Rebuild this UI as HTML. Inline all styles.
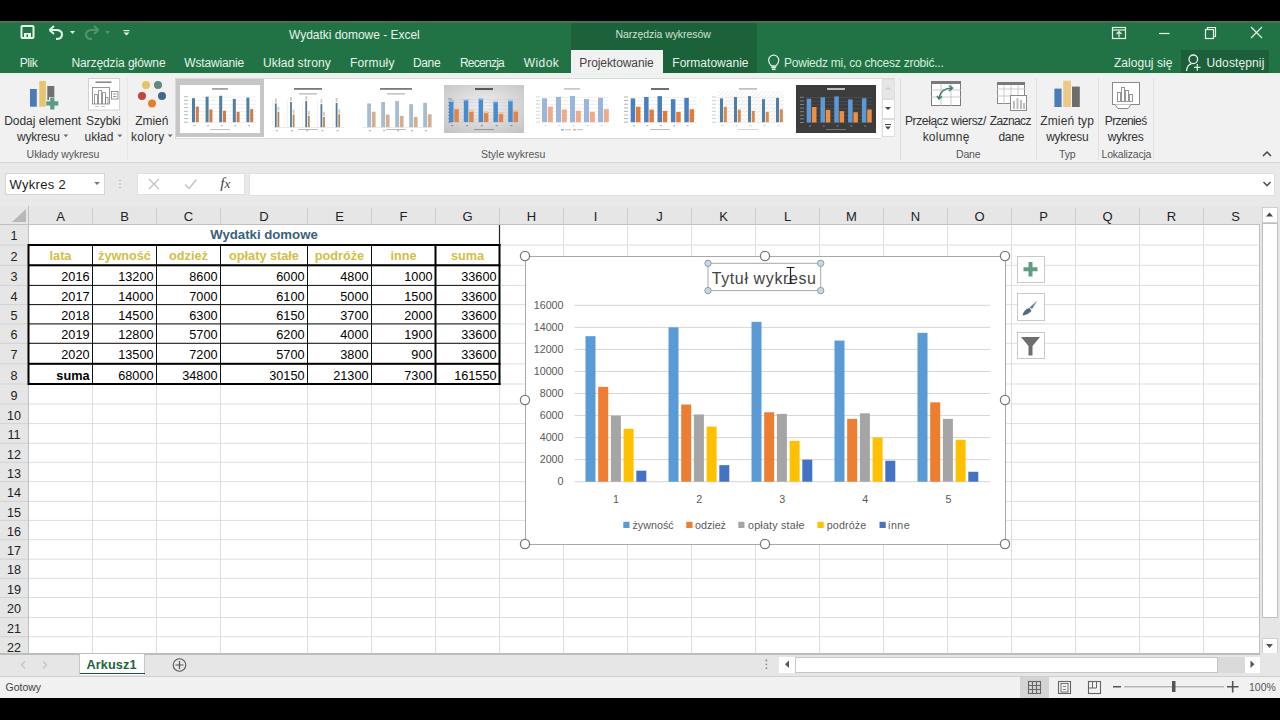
<!DOCTYPE html>
<html><head><meta charset="utf-8"><style>
html,body{margin:0;padding:0;width:1280px;height:720px;overflow:hidden;background:#fff;font-family:"Liberation Sans", sans-serif;}
body>div,body>svg{position:absolute;}
body>div{box-sizing:border-box;}
</style></head><body>
<div style="left:0px;top:0px;width:1280px;height:21px;background:#000"></div>
<div style="left:0px;top:21px;width:1280px;height:52px;background:#217346"></div>
<div style="left:571px;top:21px;width:186px;height:52px;background:#1b6139"></div>
<div style="left:0px;top:21px;width:1280px;height:1.5px;background:#46705a"></div>
<div style="left:571px;top:50px;width:92px;height:23px;background:#f1f1f1"></div>
<div style="left:1181px;top:50px;width:88px;height:23px;background:#1c5f3a"></div>
<svg style="left:0;top:21px" width="140" height="29" viewBox="0 21 140 29">
<g fill="none" stroke="#e6f4ea" stroke-width="2">
<rect x="21.5" y="26" width="12" height="12" rx="1"/>
</g>
<rect x="24" y="33" width="7" height="5" fill="#e6f4ea"/>
<rect x="26.5" y="34.5" width="1.5" height="2.5" fill="#217346"/>
<path d="M51 30 L56 30 Q62 30 62 34.5 Q62 39 56 39" fill="none" stroke="#e6f4ea" stroke-width="2"/>
<path d="M49.5 30 L54 26 M49.5 30 L54 34" fill="none" stroke="#e6f4ea" stroke-width="2"/>
<path d="M70 31 L75 31 L72.5 34 Z" fill="#e6f4ea"/>
<g opacity="0.25">
<path d="M97 30 L92 30 Q86 30 86 34.5 Q86 39 92 39" fill="none" stroke="#e6f4ea" stroke-width="2"/>
<path d="M98.5 30 L94 26 M98.5 30 L94 34" fill="none" stroke="#e6f4ea" stroke-width="2"/>
<path d="M105 31 L110 31 L107.5 34 Z" fill="#e6f4ea"/>
</g>
<rect x="123.5" y="30" width="6" height="1.2" fill="#e6f4ea"/>
<path d="M123.5 32.5 L129.5 32.5 L126.5 35.5 Z" fill="#e6f4ea"/>
</svg>
<div style="left:154.38879464285714px;top:28.5px;width:400px;text-align:center;font-size:12px;color:#e6f4ea;font-weight:normal;white-space:nowrap;line-height:1.15;letter-spacing:-0.022px;">Wydatki domowe - Excel</div>
<div style="left:463.1711259191177px;top:28px;width:400px;text-align:center;font-size:10.5px;color:#cfe3d6;font-weight:normal;white-space:nowrap;line-height:1.15;letter-spacing:-0.058px;">Narzędzia wykresów</div>
<svg style="left:1100px;top:21px" width="180" height="29" viewBox="1100 21 180 29">
<g fill="none" stroke="#e6f4ea" stroke-width="1.2">
<rect x="1112.5" y="27.5" width="13" height="11"/>
<line x1="1112.5" y1="30" x2="1125.5" y2="30"/>
<path d="M1119 37.5 V31.5 M1116.5 34 L1119 31.5 L1121.5 34"/>
<line x1="1159" y1="33.5" x2="1169.5" y2="33.5"/>
<rect x="1205.5" y="29.5" width="8" height="9"/>
<path d="M1207.5 29.5 V27.5 H1215.5 V36.5 H1213.5"/>
<path d="M1251 27 L1262 38 M1262 27 L1251 38"/>
</g></svg>
<div style="left:19.8px;top:57px;font-size:12px;color:#e6f4ea;font-weight:normal;white-space:nowrap;line-height:1.15;letter-spacing:-0.446px;">Plik</div>
<div style="left:71.4px;top:57px;font-size:12px;color:#e6f4ea;font-weight:normal;white-space:nowrap;line-height:1.15;letter-spacing:-0.079px;">Narzędzia główne</div>
<div style="left:184.3px;top:57px;font-size:12px;color:#e6f4ea;font-weight:normal;white-space:nowrap;line-height:1.15;letter-spacing:-0.151px;">Wstawianie</div>
<div style="left:263.1px;top:57px;font-size:12px;color:#e6f4ea;font-weight:normal;white-space:nowrap;line-height:1.15;letter-spacing:0.082px;">Układ strony</div>
<div style="left:349.9px;top:57px;font-size:12px;color:#e6f4ea;font-weight:normal;white-space:nowrap;line-height:1.15;letter-spacing:0.194px;">Formuły</div>
<div style="left:413.0px;top:57px;font-size:12px;color:#e6f4ea;font-weight:normal;white-space:nowrap;line-height:1.15;letter-spacing:-0.363px;">Dane</div>
<div style="left:459.9px;top:57px;font-size:12px;color:#e6f4ea;font-weight:normal;white-space:nowrap;line-height:1.15;letter-spacing:-0.733px;">Recenzja</div>
<div style="left:523.7px;top:57px;font-size:12px;color:#e6f4ea;font-weight:normal;white-space:nowrap;line-height:1.15;letter-spacing:0.440px;">Widok</div>
<div style="left:579.3px;top:57px;font-size:12px;color:#444;font-weight:normal;white-space:nowrap;line-height:1.15;letter-spacing:-0.073px;">Projektowanie</div>
<div style="left:672.3px;top:57px;font-size:12px;color:#e6f4ea;font-weight:normal;white-space:nowrap;line-height:1.15;letter-spacing:0.015px;">Formatowanie</div>
<div style="left:784px;top:57px;font-size:12px;color:#d8eedd;font-weight:normal;white-space:nowrap;line-height:1.15;letter-spacing:-0.231px;">Powiedz mi, co chcesz zrobić...</div>
<svg style="left:764px;top:52px" width="18" height="20" viewBox="764 52 18 20">
<path d="M771.3 65.8 Q768.6 62.8 768.6 60.3 A5.1 5.1 0 0 1 778.8 60.3 Q778.8 62.8 776.1 65.8 Z" fill="none" stroke="#e6f4ea" stroke-width="1.2"/>
<path d="M771.3 67.3 H776.1 M771.9 69.2 H775.5" stroke="#e6f4ea" stroke-width="1.4"/>
</svg>
<div style="left:1114px;top:57px;font-size:12px;color:#e6f4ea;font-weight:normal;white-space:nowrap;line-height:1.15;letter-spacing:0.027px;">Zaloguj się</div>
<div style="left:1206.5px;top:57px;font-size:12px;color:#e6f4ea;font-weight:normal;white-space:nowrap;line-height:1.15;letter-spacing:0.122px;">Udostępnij</div>
<svg style="left:1182px;top:50px" width="22" height="23" viewBox="1182 50 22 23">
<circle cx="1193.3" cy="59.3" r="4.3" fill="none" stroke="#e6f4ea" stroke-width="1.3"/>
<path d="M1186.5 71 Q1187 65 1191.5 63.6" fill="none" stroke="#e6f4ea" stroke-width="1.3"/>
<path d="M1194 67.3 H1200.6 M1197.3 64 V70.8" stroke="#e6f4ea" stroke-width="1.2"/>
</svg>
<div style="left:0px;top:73px;width:1280px;height:89px;background:#f1f1f1"></div>
<div style="left:0px;top:73px;width:1280px;height:4px;background:linear-gradient(#e6f2e9,#eff3f0)"></div>
<div style="left:0px;top:161.6px;width:1280px;height:1px;background:#d4d4d4"></div>
<div style="left:127px;top:78px;width:1px;height:82px;background:#e7e7e7"></div>
<div style="left:900px;top:78px;width:1px;height:82px;background:#dddddd"></div>
<div style="left:1036px;top:78px;width:1px;height:82px;background:#e0e0e0"></div>
<div style="left:1098px;top:78px;width:1px;height:82px;background:#e0e0e0"></div>
<div style="left:1153px;top:78px;width:1px;height:82px;background:#e0e0e0"></div>
<div style="left:-37.02777493990384px;top:148px;width:200px;text-align:center;font-size:10.5px;color:#555;font-weight:normal;white-space:nowrap;line-height:1.15;letter-spacing:-0.056px;">Układy wykresu</div>
<div style="left:413.1804069010417px;top:148px;width:200px;text-align:center;font-size:10.5px;color:#555;font-weight:normal;white-space:nowrap;line-height:1.15;letter-spacing:-0.039px;">Style wykresu</div>
<div style="left:868.21626953125px;top:148px;width:200px;text-align:center;font-size:10.5px;color:#555;font-weight:normal;white-space:nowrap;line-height:1.15;letter-spacing:-0.167px;">Dane</div>
<div style="left:967.268828125px;top:148px;width:200px;text-align:center;font-size:10.5px;color:#555;font-weight:normal;white-space:nowrap;line-height:1.15;letter-spacing:-0.062px;">Typ</div>
<div style="left:1026.397603515625px;top:148px;width:200px;text-align:center;font-size:10.5px;color:#555;font-weight:normal;white-space:nowrap;line-height:1.15;letter-spacing:-0.205px;">Lokalizacja</div>
<div style="left:-57.31588541666666px;top:115px;width:200px;text-align:center;font-size:12px;color:#333;font-weight:normal;white-space:nowrap;line-height:1.15;letter-spacing:-0.032px;">Dodaj element</div>
<div style="left:17px;top:130.5px;font-size:12px;color:#333;font-weight:normal;white-space:nowrap;line-height:1.15;letter-spacing:-0.185px;">wykresu</div>
<div style="left:3.3255312500000116px;top:115px;width:200px;text-align:center;font-size:12px;color:#333;font-weight:normal;white-space:nowrap;line-height:1.15;letter-spacing:-0.149px;">Szybki</div>
<div style="left:84.5px;top:130.5px;font-size:12px;color:#333;font-weight:normal;white-space:nowrap;line-height:1.15;letter-spacing:0.078px;">układ</div>
<div style="left:51.76984375000001px;top:115px;width:200px;text-align:center;font-size:12px;color:#333;font-weight:normal;white-space:nowrap;line-height:1.15;letter-spacing:-0.060px;">Zmień</div>
<div style="left:131px;top:130.5px;font-size:12px;color:#333;font-weight:normal;white-space:nowrap;line-height:1.15;letter-spacing:0.238px;">kolory</div>
<svg style="left:0;top:130px" width="180" height="10" viewBox="0 130 180 10"><path d="M63.5 134.6 H68.3 L65.9 137.2 Z M117.5 134.6 H122.3 L119.9 137.2 Z M167.8 134.6 H172.6 L170.2 137.2 Z" fill="#6a6a6a"/></svg>
<div style="left:845.4238020833334px;top:115px;width:200px;text-align:center;font-size:12px;color:#333;font-weight:normal;white-space:nowrap;line-height:1.15;letter-spacing:-0.352px;">Przełącz wiersz/</div>
<div style="left:846.1117447916666px;top:130.5px;width:200px;text-align:center;font-size:12px;color:#333;font-weight:normal;white-space:nowrap;line-height:1.15;letter-spacing:0.223px;">kolumnę</div>
<div style="left:910.2872916666666px;top:115px;width:200px;text-align:center;font-size:12px;color:#333;font-weight:normal;white-space:nowrap;line-height:1.15;letter-spacing:-0.625px;">Zaznacz</div>
<div style="left:911.2839583333333px;top:130.5px;width:200px;text-align:center;font-size:12px;color:#333;font-weight:normal;white-space:nowrap;line-height:1.15;letter-spacing:-0.232px;">dane</div>
<div style="left:967.1573242187499px;top:115px;width:200px;text-align:center;font-size:12px;color:#333;font-weight:normal;white-space:nowrap;line-height:1.15;letter-spacing:0.115px;">Zmień typ</div>
<div style="left:967.2657552083335px;top:130.5px;width:200px;text-align:center;font-size:12px;color:#333;font-weight:normal;white-space:nowrap;line-height:1.15;letter-spacing:-0.268px;">wykresu</div>
<div style="left:1025.6936160714286px;top:115px;width:200px;text-align:center;font-size:12px;color:#333;font-weight:normal;white-space:nowrap;line-height:1.15;letter-spacing:-0.613px;">Przenieś</div>
<div style="left:1025.5763125px;top:130.5px;width:200px;text-align:center;font-size:12px;color:#333;font-weight:normal;white-space:nowrap;line-height:1.15;letter-spacing:-0.247px;">wykres</div>
<svg style="left:1258px;top:147px" width="18" height="12" viewBox="0 0 18 12"><path d="M5 9 L9 5 L13 9" fill="none" stroke="#444" stroke-width="1.5"/></svg>
<svg style="left:0;top:73px" width="180" height="45" viewBox="0 73 180 45">
<rect x="30" y="89" width="6.8" height="17.7" fill="#4a7ab8"/>
<rect x="39.3" y="81" width="6.6" height="25.7" fill="#e6c56f"/>
<rect x="47.3" y="86" width="7" height="14" fill="#707070"/>
<path d="M52.3 97 V110 M45.8 103.3 H58.8" stroke="#f1f1f1" stroke-width="6.5"/>
<path d="M52.3 97.5 V109.5 M46.3 103.3 H58.3" stroke="#5b9a84" stroke-width="4.2"/>
<rect x="88.5" y="78.5" width="31" height="31.5" fill="#fff" stroke="#d2d2d2"/>
<line x1="95.5" y1="82.2" x2="111.5" y2="82.2" stroke="#8a8a8a" stroke-width="1.6"/>
<g stroke="#7d7d7d" stroke-width="0.8" fill="none">
<rect x="92.5" y="87.5" width="17" height="16.5"/>
<path d="M94.5 104 V94.5 H97.5 V104 M98.5 104 V90.5 H101.5 V104 M102.5 104 V92.5 H105.5 V104 M105.5 104 V97.5 H108 V104"/>
<rect x="111.5" y="91.5" width="6.5" height="7.5"/>
<path d="M113 94 H116.5 M113 96.5 H116.5"/>
</g>
<path d="M95 106.5 H99 M101 106.5 H105" stroke="#aaa" stroke-width="0.7"/>
<circle cx="146" cy="85" r="4" fill="#e8c25c"/>
<circle cx="158" cy="85" r="4" fill="#5e8a84"/>
<circle cx="142" cy="96" r="4" fill="#c0473a"/>
<circle cx="162" cy="96" r="4" fill="#41678e"/>
<circle cx="152" cy="103.5" r="4" fill="#e0822a"/>
</svg>
<svg style="left:920px;top:73px" width="240" height="45" viewBox="920 73 240 45">
<g fill="#fff" stroke="#7a7a7a" stroke-width="1">
<rect x="931.5" y="81.5" width="29" height="24"/>
</g>
<rect x="931" y="81" width="30" height="3" fill="#7a7a7a"/>
<g stroke="#bdbdbd" stroke-width="0.8"><path d="M931 90 H961 M931 97 H961 M941 84 V106 M951 84 V106"/></g>
<path d="M939 98 Q941 88 952 88" fill="none" stroke="#3d7b74" stroke-width="1.5"/>
<path d="M949 85.5 L952.5 88 L949 91 M937 96 L939 99 L942 96.5" fill="none" stroke="#3d7b74" stroke-width="1.5"/>
<rect x="997.5" y="82.5" width="27" height="21" fill="#fff" stroke="#8a8a8a"/>
<rect x="997" y="82" width="28" height="3" fill="#7a7a7a"/>
<g stroke="#c0c0c0" stroke-width="0.8"><path d="M997 89 H1025 M997 96 H1025 M1004 85 V104 M1011 85 V104 M1018 85 V104"/></g>
<rect x="1010.5" y="95.5" width="16" height="15" fill="#fff" stroke="#8a8a8a"/>
<g fill="#bdbdbd"><rect x="1013" y="101" width="2" height="8"/><rect x="1016.5" y="98" width="2" height="11"/><rect x="1020" y="100" width="2" height="9"/><rect x="1023" y="103" width="2" height="6"/></g>
<rect x="1054.4" y="88.6" width="7.2" height="18.4" fill="#4a7ab8"/>
<rect x="1063.2" y="80.7" width="7.8" height="26.3" fill="#ecc986"/>
<rect x="1072" y="86.6" width="7.8" height="20.4" fill="#6d6d6d"/>
<rect x="1112.5" y="82.5" width="27" height="22" fill="#fff" stroke="#8a8a8a"/>
<path d="M1115 104.5 L1118 108.5 H1128 L1131 104.5" fill="#fff" stroke="#8a8a8a"/>
<g fill="none" stroke="#8a8a8a" stroke-width="0.9"><rect x="1117.5" y="92.5" width="3" height="9"/><rect x="1121.5" y="87.5" width="3" height="14"/><rect x="1125.5" y="90.5" width="3" height="11"/><rect x="1129.5" y="94.5" width="3" height="7"/></g>
</svg>
<div style="left:175px;top:78px;width:720px;height:61px;background:#fff;border:1px solid #d9d9d9;box-sizing:border-box"></div>
<div style="left:175.5px;top:79px;width:88.5px;height:57.5px;background:#c6c6c6"></div>
<div style="left:880.5px;top:78.5px;width:15px;height:60px;background:#f2f2f2"></div>
<div style="left:881.5px;top:78.8px;width:13px;height:20.5px;background:#e6e6e6;border:1px solid #e0e0e0;box-sizing:border-box"></div>
<div style="left:881.5px;top:99.3px;width:13px;height:19.5px;background:#fff;border:1px solid #dedede;box-sizing:border-box"></div>
<div style="left:881.5px;top:118.8px;width:13px;height:18.5px;background:#fff;border:1px solid #dedede;box-sizing:border-box"></div>
<svg style="left:881px;top:79px" width="14" height="58" viewBox="0 0 14 58"><path d="M4.5 11 L7 8.5 L9.5 11" fill="none" stroke="#bbb" stroke-width="1"/><path d="M4 28 H10 L7 31 Z" fill="#444"/><path d="M4 45.5 H10" stroke="#444" stroke-width="1"/><path d="M4 47.5 H10 L7 50.5 Z" fill="#444"/></svg>
<svg style="left:180px;top:84.8px" width="80" height="48" viewBox="0 0 80 48"><rect width="80" height="48" fill="#fff"/><rect x="10" y="37.20" width="66" height="0.6" fill="#e6e6e6"/><rect x="10" y="33.56" width="66" height="0.6" fill="#e6e6e6"/><rect x="10" y="29.92" width="66" height="0.6" fill="#e6e6e6"/><rect x="10" y="26.28" width="66" height="0.6" fill="#e6e6e6"/><rect x="10" y="22.64" width="66" height="0.6" fill="#e6e6e6"/><rect x="10" y="19.00" width="66" height="0.6" fill="#e6e6e6"/><rect x="10" y="15.36" width="66" height="0.6" fill="#e6e6e6"/><rect x="10" y="11.72" width="66" height="0.6" fill="#e6e6e6"/><rect x="4" y="36.70" width="4" height="1" fill="#333" opacity="0.35"/><rect x="4" y="33.06" width="4" height="1" fill="#333" opacity="0.35"/><rect x="4" y="29.42" width="4" height="1" fill="#333" opacity="0.35"/><rect x="4" y="25.78" width="4" height="1" fill="#333" opacity="0.35"/><rect x="4" y="22.14" width="4" height="1" fill="#333" opacity="0.35"/><rect x="4" y="18.50" width="4" height="1" fill="#333" opacity="0.35"/><rect x="4" y="14.86" width="4" height="1" fill="#333" opacity="0.35"/><rect x="4" y="11.22" width="4" height="1" fill="#333" opacity="0.35"/><rect x="12.00" y="13.18" width="3" height="24.02" fill="#4f7fa3"/><rect x="15.80" y="21.55" width="3" height="15.65" fill="#d27a48"/><rect x="13.50" y="40.20" width="2" height="1" fill="#333" opacity="0.4"/><rect x="25.60" y="11.72" width="3" height="25.48" fill="#4f7fa3"/><rect x="29.40" y="24.46" width="3" height="12.74" fill="#d27a48"/><rect x="27.10" y="40.20" width="2" height="1" fill="#333" opacity="0.4"/><rect x="39.20" y="10.81" width="3" height="26.39" fill="#4f7fa3"/><rect x="43.00" y="25.73" width="3" height="11.47" fill="#d27a48"/><rect x="40.70" y="40.20" width="2" height="1" fill="#333" opacity="0.4"/><rect x="52.80" y="13.90" width="3" height="23.30" fill="#4f7fa3"/><rect x="56.60" y="26.83" width="3" height="10.37" fill="#d27a48"/><rect x="54.30" y="40.20" width="2" height="1" fill="#333" opacity="0.4"/><rect x="66.40" y="12.63" width="3" height="24.57" fill="#4f7fa3"/><rect x="70.20" y="24.10" width="3" height="13.10" fill="#d27a48"/><rect x="67.90" y="40.20" width="2" height="1" fill="#333" opacity="0.4"/><rect x="32.0" y="3" width="16" height="1.8" fill="#333" opacity="0.45"/><rect x="30" y="44" width="20" height="1" fill="#333" opacity="0.3"/></svg>
<svg style="left:268px;top:84.8px" width="80" height="48" viewBox="0 0 80 48"><rect width="80" height="48" fill="#fff"/><rect x="6" y="42.20" width="70" height="0.6" fill="#ddd"/><rect x="3.90" y="15.20" width="0.5" height="27" fill="#e4e4e4"/><rect x="19.10" y="15.20" width="0.5" height="27" fill="#e4e4e4"/><rect x="34.30" y="15.20" width="0.5" height="27" fill="#e4e4e4"/><rect x="49.50" y="15.20" width="0.5" height="27" fill="#e4e4e4"/><rect x="64.70" y="15.20" width="0.5" height="27" fill="#e4e4e4"/><rect x="79.90" y="15.20" width="0.5" height="27" fill="#e4e4e4"/><rect x="6.90" y="18.44" width="1.8" height="23.76" fill="#5a7890"/><rect x="9.50" y="26.72" width="1.8" height="15.48" fill="#b08a60"/><rect x="6.90" y="13.44" width="1.8" height="4" fill="#999" opacity="0.5"/><rect x="9.50" y="21.72" width="1.8" height="4" fill="#999" opacity="0.5"/><rect x="7.80" y="45.20" width="2" height="1" fill="#222" opacity="0.4"/><rect x="22.10" y="17.00" width="1.8" height="25.20" fill="#5a7890"/><rect x="24.70" y="29.60" width="1.8" height="12.60" fill="#b08a60"/><rect x="22.10" y="12.00" width="1.8" height="4" fill="#999" opacity="0.5"/><rect x="24.70" y="24.60" width="1.8" height="4" fill="#999" opacity="0.5"/><rect x="23.00" y="45.20" width="2" height="1" fill="#222" opacity="0.4"/><rect x="37.30" y="16.10" width="1.8" height="26.10" fill="#5a7890"/><rect x="39.90" y="30.86" width="1.8" height="11.34" fill="#b08a60"/><rect x="37.30" y="11.10" width="1.8" height="4" fill="#999" opacity="0.5"/><rect x="39.90" y="25.86" width="1.8" height="4" fill="#999" opacity="0.5"/><rect x="38.20" y="45.20" width="2" height="1" fill="#222" opacity="0.4"/><rect x="52.50" y="19.16" width="1.8" height="23.04" fill="#5a7890"/><rect x="55.10" y="31.94" width="1.8" height="10.26" fill="#b08a60"/><rect x="52.50" y="14.16" width="1.8" height="4" fill="#999" opacity="0.5"/><rect x="55.10" y="26.94" width="1.8" height="4" fill="#999" opacity="0.5"/><rect x="53.40" y="45.20" width="2" height="1" fill="#222" opacity="0.4"/><rect x="67.70" y="17.90" width="1.8" height="24.30" fill="#5a7890"/><rect x="70.30" y="29.24" width="1.8" height="12.96" fill="#b08a60"/><rect x="67.70" y="12.90" width="1.8" height="4" fill="#999" opacity="0.5"/><rect x="70.30" y="24.24" width="1.8" height="4" fill="#999" opacity="0.5"/><rect x="68.60" y="45.20" width="2" height="1" fill="#222" opacity="0.4"/><rect x="26.0" y="3" width="28" height="1.8" fill="#222" opacity="0.6"/><rect x="31" y="8.3" width="18" height="1.2" fill="#222" opacity="0.35"/><rect x="30" y="44" width="20" height="1" fill="#222" opacity="0.3"/></svg>
<svg style="left:356px;top:84.8px" width="80" height="48" viewBox="0 0 80 48"><rect width="80" height="48" fill="#fff"/><rect x="6" y="42.20" width="70" height="0.6" fill="#ddd"/><rect x="11.20" y="18.44" width="3.8" height="23.76" fill="#a6bcd0"/><rect x="15.80" y="26.72" width="3.8" height="15.48" fill="#d4b090"/><rect x="13.10" y="45.20" width="2" height="1" fill="#222" opacity="0.4"/><rect x="25.20" y="17.00" width="3.8" height="25.20" fill="#a6bcd0"/><rect x="29.80" y="29.60" width="3.8" height="12.60" fill="#d4b090"/><rect x="27.10" y="45.20" width="2" height="1" fill="#222" opacity="0.4"/><rect x="39.20" y="16.10" width="3.8" height="26.10" fill="#a6bcd0"/><rect x="43.80" y="30.86" width="3.8" height="11.34" fill="#d4b090"/><rect x="41.10" y="45.20" width="2" height="1" fill="#222" opacity="0.4"/><rect x="53.20" y="19.16" width="3.8" height="23.04" fill="#a6bcd0"/><rect x="57.80" y="31.94" width="3.8" height="10.26" fill="#d4b090"/><rect x="55.10" y="45.20" width="2" height="1" fill="#222" opacity="0.4"/><rect x="67.20" y="17.90" width="3.8" height="24.30" fill="#a6bcd0"/><rect x="71.80" y="29.24" width="3.8" height="12.96" fill="#d4b090"/><rect x="69.10" y="45.20" width="2" height="1" fill="#222" opacity="0.4"/><rect x="24.0" y="3" width="32" height="1.8" fill="#222" opacity="0.6"/><rect x="31" y="8.3" width="18" height="1.2" fill="#222" opacity="0.35"/><rect x="30" y="44" width="20" height="1" fill="#222" opacity="0.3"/></svg>
<svg style="left:444px;top:84.8px" width="80" height="48" viewBox="0 0 80 48"><defs><radialGradient id="g4" cx="50%" cy="45%" r="70%"><stop offset="0" stop-color="#f2f2f2"/><stop offset="1" stop-color="#c4c4c4"/></radialGradient></defs><rect width="80" height="48" fill="url(#g4)"/><rect x="10" y="37.10" width="66" height="0.6" fill="#d0d0d0"/><rect x="10" y="33.80" width="66" height="0.6" fill="#d0d0d0"/><rect x="10" y="30.50" width="66" height="0.6" fill="#d0d0d0"/><rect x="10" y="27.20" width="66" height="0.6" fill="#d0d0d0"/><rect x="10" y="23.90" width="66" height="0.6" fill="#d0d0d0"/><rect x="10" y="20.60" width="66" height="0.6" fill="#d0d0d0"/><rect x="10" y="17.30" width="66" height="0.6" fill="#d0d0d0"/><rect x="10" y="14.00" width="66" height="0.6" fill="#d0d0d0"/><rect x="4" y="36.60" width="4" height="1" fill="#111" opacity="0.35"/><rect x="4" y="33.30" width="4" height="1" fill="#111" opacity="0.35"/><rect x="4" y="30.00" width="4" height="1" fill="#111" opacity="0.35"/><rect x="4" y="26.70" width="4" height="1" fill="#111" opacity="0.35"/><rect x="4" y="23.40" width="4" height="1" fill="#111" opacity="0.35"/><rect x="4" y="20.10" width="4" height="1" fill="#111" opacity="0.35"/><rect x="4" y="16.80" width="4" height="1" fill="#111" opacity="0.35"/><rect x="4" y="13.50" width="4" height="1" fill="#111" opacity="0.35"/><rect x="5.00" y="15.32" width="4.5" height="21.78" fill="#4a8bd0"/><rect x="10.30" y="22.91" width="4.5" height="14.19" fill="#e0844a"/><rect x="5.00" y="15.32" width="4.5" height="1.5" fill="#a8cdf0"/><rect x="10.30" y="22.91" width="4.5" height="1.5" fill="#f6c9a4"/><rect x="7.25" y="40.10" width="2" height="1" fill="#111" opacity="0.4"/><rect x="19.80" y="14.00" width="4.5" height="23.10" fill="#4a8bd0"/><rect x="25.10" y="25.55" width="4.5" height="11.55" fill="#e0844a"/><rect x="19.80" y="14.00" width="4.5" height="1.5" fill="#a8cdf0"/><rect x="25.10" y="25.55" width="4.5" height="1.5" fill="#f6c9a4"/><rect x="22.05" y="40.10" width="2" height="1" fill="#111" opacity="0.4"/><rect x="34.60" y="13.18" width="4.5" height="23.93" fill="#4a8bd0"/><rect x="39.90" y="26.71" width="4.5" height="10.39" fill="#e0844a"/><rect x="34.60" y="13.18" width="4.5" height="1.5" fill="#a8cdf0"/><rect x="39.90" y="26.71" width="4.5" height="1.5" fill="#f6c9a4"/><rect x="36.85" y="40.10" width="2" height="1" fill="#111" opacity="0.4"/><rect x="49.40" y="15.98" width="4.5" height="21.12" fill="#4a8bd0"/><rect x="54.70" y="27.70" width="4.5" height="9.40" fill="#e0844a"/><rect x="49.40" y="15.98" width="4.5" height="1.5" fill="#a8cdf0"/><rect x="54.70" y="27.70" width="4.5" height="1.5" fill="#f6c9a4"/><rect x="51.65" y="40.10" width="2" height="1" fill="#111" opacity="0.4"/><rect x="64.20" y="14.83" width="4.5" height="22.27" fill="#4a8bd0"/><rect x="69.50" y="25.22" width="4.5" height="11.88" fill="#e0844a"/><rect x="64.20" y="14.83" width="4.5" height="1.5" fill="#a8cdf0"/><rect x="69.50" y="25.22" width="4.5" height="1.5" fill="#f6c9a4"/><rect x="66.45" y="40.10" width="2" height="1" fill="#111" opacity="0.4"/><rect x="31.0" y="3" width="18" height="2.0" fill="#111" opacity="0.65"/><rect x="30" y="44" width="20" height="1" fill="#111" opacity="0.3"/></svg>
<svg style="left:532px;top:84.8px" width="80" height="48" viewBox="0 0 80 48"><rect width="80" height="48" fill="#fff"/><rect x="10" y="37.10" width="66" height="0.6" fill="#e6e6e6"/><rect x="10" y="33.50" width="66" height="0.6" fill="#e6e6e6"/><rect x="10" y="29.90" width="66" height="0.6" fill="#e6e6e6"/><rect x="10" y="26.30" width="66" height="0.6" fill="#e6e6e6"/><rect x="10" y="22.70" width="66" height="0.6" fill="#e6e6e6"/><rect x="10" y="19.10" width="66" height="0.6" fill="#e6e6e6"/><rect x="10" y="15.50" width="66" height="0.6" fill="#e6e6e6"/><rect x="10" y="11.90" width="66" height="0.6" fill="#e6e6e6"/><rect x="4" y="36.60" width="4" height="1" fill="#888" opacity="0.35"/><rect x="4" y="33.00" width="4" height="1" fill="#888" opacity="0.35"/><rect x="4" y="29.40" width="4" height="1" fill="#888" opacity="0.35"/><rect x="4" y="25.80" width="4" height="1" fill="#888" opacity="0.35"/><rect x="4" y="22.20" width="4" height="1" fill="#888" opacity="0.35"/><rect x="4" y="18.60" width="4" height="1" fill="#888" opacity="0.35"/><rect x="4" y="15.00" width="4" height="1" fill="#888" opacity="0.35"/><rect x="4" y="11.40" width="4" height="1" fill="#888" opacity="0.35"/><rect x="10.00" y="13.34" width="5" height="23.76" fill="#9ab7db"/><rect x="15.80" y="21.62" width="5" height="15.48" fill="#f0a98a"/><rect x="12.50" y="40.10" width="2" height="1" fill="#888" opacity="0.4"/><rect x="24.00" y="11.90" width="5" height="25.20" fill="#9ab7db"/><rect x="29.80" y="24.50" width="5" height="12.60" fill="#f0a98a"/><rect x="26.50" y="40.10" width="2" height="1" fill="#888" opacity="0.4"/><rect x="38.00" y="11.00" width="5" height="26.10" fill="#9ab7db"/><rect x="43.80" y="25.76" width="5" height="11.34" fill="#f0a98a"/><rect x="40.50" y="40.10" width="2" height="1" fill="#888" opacity="0.4"/><rect x="52.00" y="14.06" width="5" height="23.04" fill="#9ab7db"/><rect x="57.80" y="26.84" width="5" height="10.26" fill="#f0a98a"/><rect x="54.50" y="40.10" width="2" height="1" fill="#888" opacity="0.4"/><rect x="66.00" y="12.80" width="5" height="24.30" fill="#9ab7db"/><rect x="71.80" y="24.14" width="5" height="12.96" fill="#f0a98a"/><rect x="68.50" y="40.10" width="2" height="1" fill="#888" opacity="0.4"/><rect x="32.0" y="3" width="16" height="1.8" fill="#888" opacity="0.45"/><rect x="29" y="44" width="3" height="1.5" fill="#9ab7db"/><rect x="33" y="44" width="6" height="1.2" fill="#999" opacity="0.5"/><rect x="41" y="44" width="3" height="1.5" fill="#f0a98a"/><rect x="45" y="44" width="6" height="1.2" fill="#999" opacity="0.5"/></svg>
<svg style="left:620px;top:84.8px" width="80" height="48" viewBox="0 0 80 48"><rect width="80" height="48" fill="#fff"/><rect x="10" y="37.20" width="66" height="0.6" fill="#e6e6e6"/><rect x="10" y="33.60" width="66" height="0.6" fill="#e6e6e6"/><rect x="10" y="30.00" width="66" height="0.6" fill="#e6e6e6"/><rect x="10" y="26.40" width="66" height="0.6" fill="#e6e6e6"/><rect x="10" y="22.80" width="66" height="0.6" fill="#e6e6e6"/><rect x="10" y="19.20" width="66" height="0.6" fill="#e6e6e6"/><rect x="10" y="15.60" width="66" height="0.6" fill="#e6e6e6"/><rect x="10" y="12.00" width="66" height="0.6" fill="#e6e6e6"/><rect x="4" y="36.70" width="4" height="1" fill="#222" opacity="0.35"/><rect x="4" y="33.10" width="4" height="1" fill="#222" opacity="0.35"/><rect x="4" y="29.50" width="4" height="1" fill="#222" opacity="0.35"/><rect x="4" y="25.90" width="4" height="1" fill="#222" opacity="0.35"/><rect x="4" y="22.30" width="4" height="1" fill="#222" opacity="0.35"/><rect x="4" y="18.70" width="4" height="1" fill="#222" opacity="0.35"/><rect x="4" y="15.10" width="4" height="1" fill="#222" opacity="0.35"/><rect x="4" y="11.50" width="4" height="1" fill="#222" opacity="0.35"/><rect x="10.70" y="13.44" width="4.5" height="23.76" fill="#4a7fbf"/><rect x="16.00" y="21.72" width="4.5" height="15.48" fill="#e07b39"/><rect x="12.95" y="40.20" width="2" height="1" fill="#222" opacity="0.4"/><rect x="24.10" y="12.00" width="4.5" height="25.20" fill="#4a7fbf"/><rect x="29.40" y="24.60" width="4.5" height="12.60" fill="#e07b39"/><rect x="26.35" y="40.20" width="2" height="1" fill="#222" opacity="0.4"/><rect x="37.50" y="11.10" width="4.5" height="26.10" fill="#4a7fbf"/><rect x="42.80" y="25.86" width="4.5" height="11.34" fill="#e07b39"/><rect x="39.75" y="40.20" width="2" height="1" fill="#222" opacity="0.4"/><rect x="50.90" y="14.16" width="4.5" height="23.04" fill="#4a7fbf"/><rect x="56.20" y="26.94" width="4.5" height="10.26" fill="#e07b39"/><rect x="53.15" y="40.20" width="2" height="1" fill="#222" opacity="0.4"/><rect x="64.30" y="12.90" width="4.5" height="24.30" fill="#4a7fbf"/><rect x="69.60" y="24.24" width="4.5" height="12.96" fill="#e07b39"/><rect x="66.55" y="40.20" width="2" height="1" fill="#222" opacity="0.4"/><rect x="31.0" y="3" width="18" height="2.0" fill="#222" opacity="0.65"/><rect x="30" y="44" width="20" height="1" fill="#222" opacity="0.3"/></svg>
<svg style="left:708px;top:84.8px" width="80" height="48" viewBox="0 0 80 48"><defs><pattern id="h7" width="3" height="3" patternUnits="userSpaceOnUse" patternTransform="rotate(45)"><rect width="3" height="3" fill="#fff"/><rect width="0.8" height="3" fill="#ececec"/></pattern></defs><rect width="80" height="48" fill="#fff"/><rect x="10" y="6" width="66" height="32" fill="url(#h7)"/><rect x="10" y="37.20" width="66" height="0.6" fill="#e6e6e6"/><rect x="10" y="33.60" width="66" height="0.6" fill="#e6e6e6"/><rect x="10" y="30.00" width="66" height="0.6" fill="#e6e6e6"/><rect x="10" y="26.40" width="66" height="0.6" fill="#e6e6e6"/><rect x="10" y="22.80" width="66" height="0.6" fill="#e6e6e6"/><rect x="10" y="19.20" width="66" height="0.6" fill="#e6e6e6"/><rect x="10" y="15.60" width="66" height="0.6" fill="#e6e6e6"/><rect x="10" y="12.00" width="66" height="0.6" fill="#e6e6e6"/><rect x="4" y="36.70" width="4" height="1" fill="#777" opacity="0.35"/><rect x="4" y="33.10" width="4" height="1" fill="#777" opacity="0.35"/><rect x="4" y="29.50" width="4" height="1" fill="#777" opacity="0.35"/><rect x="4" y="25.90" width="4" height="1" fill="#777" opacity="0.35"/><rect x="4" y="22.30" width="4" height="1" fill="#777" opacity="0.35"/><rect x="4" y="18.70" width="4" height="1" fill="#777" opacity="0.35"/><rect x="4" y="15.10" width="4" height="1" fill="#777" opacity="0.35"/><rect x="4" y="11.50" width="4" height="1" fill="#777" opacity="0.35"/><rect x="12.00" y="13.44" width="3" height="23.76" fill="#4e7fa8"/><rect x="15.80" y="21.72" width="3" height="15.48" fill="#d88a4a"/><rect x="13.50" y="40.20" width="2" height="1" fill="#777" opacity="0.4"/><rect x="26.00" y="12.00" width="3" height="25.20" fill="#4e7fa8"/><rect x="29.80" y="24.60" width="3" height="12.60" fill="#d88a4a"/><rect x="27.50" y="40.20" width="2" height="1" fill="#777" opacity="0.4"/><rect x="40.00" y="11.10" width="3" height="26.10" fill="#4e7fa8"/><rect x="43.80" y="25.86" width="3" height="11.34" fill="#d88a4a"/><rect x="41.50" y="40.20" width="2" height="1" fill="#777" opacity="0.4"/><rect x="54.00" y="14.16" width="3" height="23.04" fill="#4e7fa8"/><rect x="57.80" y="26.94" width="3" height="10.26" fill="#d88a4a"/><rect x="55.50" y="40.20" width="2" height="1" fill="#777" opacity="0.4"/><rect x="68.00" y="12.90" width="3" height="24.30" fill="#4e7fa8"/><rect x="71.80" y="24.24" width="3" height="12.96" fill="#d88a4a"/><rect x="69.50" y="40.20" width="2" height="1" fill="#777" opacity="0.4"/><rect x="31.0" y="3" width="18" height="1.8" fill="#777" opacity="0.45"/><rect x="30" y="44" width="20" height="1" fill="#777" opacity="0.3"/></svg>
<svg style="left:796px;top:84.8px" width="80" height="48" viewBox="0 0 80 48"><rect width="80" height="48" fill="#3c3c3c"/><rect x="10" y="37.50" width="66" height="0.6" fill="#555"/><rect x="10" y="33.90" width="66" height="0.6" fill="#555"/><rect x="10" y="30.30" width="66" height="0.6" fill="#555"/><rect x="10" y="26.70" width="66" height="0.6" fill="#555"/><rect x="10" y="23.10" width="66" height="0.6" fill="#555"/><rect x="10" y="19.50" width="66" height="0.6" fill="#555"/><rect x="10" y="15.90" width="66" height="0.6" fill="#555"/><rect x="10" y="12.30" width="66" height="0.6" fill="#555"/><rect x="4" y="37.00" width="4" height="1" fill="#fff" opacity="0.35"/><rect x="4" y="33.40" width="4" height="1" fill="#fff" opacity="0.35"/><rect x="4" y="29.80" width="4" height="1" fill="#fff" opacity="0.35"/><rect x="4" y="26.20" width="4" height="1" fill="#fff" opacity="0.35"/><rect x="4" y="22.60" width="4" height="1" fill="#fff" opacity="0.35"/><rect x="4" y="19.00" width="4" height="1" fill="#fff" opacity="0.35"/><rect x="4" y="15.40" width="4" height="1" fill="#fff" opacity="0.35"/><rect x="4" y="11.80" width="4" height="1" fill="#fff" opacity="0.35"/><rect x="10.70" y="13.74" width="4.5" height="23.76" fill="#5a9ad8"/><rect x="16.00" y="22.02" width="4.5" height="15.48" fill="#ef9040"/><rect x="12.95" y="40.50" width="2" height="1" fill="#fff" opacity="0.4"/><rect x="24.50" y="12.30" width="4.5" height="25.20" fill="#5a9ad8"/><rect x="29.80" y="24.90" width="4.5" height="12.60" fill="#ef9040"/><rect x="26.75" y="40.50" width="2" height="1" fill="#fff" opacity="0.4"/><rect x="38.30" y="11.40" width="4.5" height="26.10" fill="#5a9ad8"/><rect x="43.60" y="26.16" width="4.5" height="11.34" fill="#ef9040"/><rect x="40.55" y="40.50" width="2" height="1" fill="#fff" opacity="0.4"/><rect x="52.10" y="14.46" width="4.5" height="23.04" fill="#5a9ad8"/><rect x="57.40" y="27.24" width="4.5" height="10.26" fill="#ef9040"/><rect x="54.35" y="40.50" width="2" height="1" fill="#fff" opacity="0.4"/><rect x="65.90" y="13.20" width="4.5" height="24.30" fill="#5a9ad8"/><rect x="71.20" y="24.54" width="4.5" height="12.96" fill="#ef9040"/><rect x="68.15" y="40.50" width="2" height="1" fill="#fff" opacity="0.4"/><rect x="31.0" y="3" width="18" height="2.0" fill="#fff" opacity="0.65"/><rect x="30" y="44" width="20" height="1" fill="#fff" opacity="0.3"/></svg>
<div style="left:0px;top:162.5px;width:1280px;height:43.5px;background:#e9e9e9"></div>
<div style="left:5px;top:173px;width:100px;height:22px;background:#fff;border:1px solid #d6d6d6;box-sizing:border-box"></div>
<div style="left:9.5px;top:177.5px;font-size:13px;color:#222;font-weight:normal;white-space:nowrap;line-height:1.15;letter-spacing:0.320px;">Wykres 2</div>
<svg style="left:92px;top:180px" width="10" height="8" viewBox="0 0 10 8"><path d="M2.2 2 H7.8 L5 5 Z" fill="#777"/></svg>
<svg style="left:116px;top:176px" width="8" height="16" viewBox="0 0 8 16"><circle cx="4" cy="4.5" r="0.75" fill="#aaa"/><circle cx="4" cy="8" r="0.75" fill="#aaa"/><circle cx="4" cy="11.5" r="0.75" fill="#aaa"/></svg>
<div style="left:137px;top:173px;width:108px;height:22px;background:#fff;border:1px solid #e0e0e0;box-sizing:border-box"></div>
<svg style="left:137px;top:173px" width="108" height="22" viewBox="137 173 108 22">
<path d="M149 179 L159 189 M159 179 L149 189" stroke="#bdbdbd" stroke-width="1.1"/>
<path d="M185 184.5 L189 188.5 L196.5 179.5" fill="none" stroke="#c4c4c4" stroke-width="1.5"/>
</svg>
<div style="left:220.3px;top:174.3px;font-size:15.5px;color:#444;font-weight:normal;white-space:nowrap;line-height:1.15;font-family:'Liberation Serif',serif"><i>f</i><i style="font-size:13px">x</i></div>
<div style="left:248.5px;top:172.6px;width:1026px;height:23px;background:#fff;border:1px solid #e0e0e0;box-sizing:border-box"></div>
<svg style="left:1261px;top:178px" width="12" height="12" viewBox="0 0 12 12"><path d="M2.5 4 L6 7.5 L9.5 4" fill="none" stroke="#555" stroke-width="1.6"/></svg>
<div style="left:0px;top:206px;width:1260px;height:19px;background:#e6e6e6"></div>
<div style="left:28.5px;top:224.5px;width:1231.5px;height:429.0px;background:#fff"></div>
<div style="left:0px;top:224.5px;width:28.5px;height:429.0px;background:#e6e6e6"></div>
<div style="left:0px;top:223.5px;width:1260px;height:1px;background:#bfbfbf"></div>
<div style="left:28px;top:206px;width:1px;height:447.5px;background:#bfbfbf"></div>
<svg style="left:0;top:206px" width="28" height="18" viewBox="0 0 28 18"><path d="M26 3 L26 16 L12 16 Z" fill="#b8b8b8"/></svg>
<svg style="left:0;top:0" width="1280" height="720" viewBox="0 0 1280 720"><rect x="92.0" y="208" width="1" height="15.5" fill="#cdcdcd"/><rect x="92.0" y="224.5" width="1" height="429.0" fill="#dedede"/><rect x="156.0" y="208" width="1" height="15.5" fill="#cdcdcd"/><rect x="156.0" y="224.5" width="1" height="429.0" fill="#dedede"/><rect x="220.0" y="208" width="1" height="15.5" fill="#cdcdcd"/><rect x="220.0" y="224.5" width="1" height="429.0" fill="#dedede"/><rect x="307.0" y="208" width="1" height="15.5" fill="#cdcdcd"/><rect x="307.0" y="224.5" width="1" height="429.0" fill="#dedede"/><rect x="371.0" y="208" width="1" height="15.5" fill="#cdcdcd"/><rect x="371.0" y="224.5" width="1" height="429.0" fill="#dedede"/><rect x="435.0" y="208" width="1" height="15.5" fill="#cdcdcd"/><rect x="435.0" y="224.5" width="1" height="429.0" fill="#dedede"/><rect x="499.0" y="208" width="1" height="15.5" fill="#cdcdcd"/><rect x="499.0" y="224.5" width="1" height="429.0" fill="#dedede"/><rect x="563.0" y="208" width="1" height="15.5" fill="#cdcdcd"/><rect x="563.0" y="224.5" width="1" height="429.0" fill="#dedede"/><rect x="627.0" y="208" width="1" height="15.5" fill="#cdcdcd"/><rect x="627.0" y="224.5" width="1" height="429.0" fill="#dedede"/><rect x="691.0" y="208" width="1" height="15.5" fill="#cdcdcd"/><rect x="691.0" y="224.5" width="1" height="429.0" fill="#dedede"/><rect x="755.0" y="208" width="1" height="15.5" fill="#cdcdcd"/><rect x="755.0" y="224.5" width="1" height="429.0" fill="#dedede"/><rect x="819.0" y="208" width="1" height="15.5" fill="#cdcdcd"/><rect x="819.0" y="224.5" width="1" height="429.0" fill="#dedede"/><rect x="883.0" y="208" width="1" height="15.5" fill="#cdcdcd"/><rect x="883.0" y="224.5" width="1" height="429.0" fill="#dedede"/><rect x="947.0" y="208" width="1" height="15.5" fill="#cdcdcd"/><rect x="947.0" y="224.5" width="1" height="429.0" fill="#dedede"/><rect x="1011.0" y="208" width="1" height="15.5" fill="#cdcdcd"/><rect x="1011.0" y="224.5" width="1" height="429.0" fill="#dedede"/><rect x="1075.0" y="208" width="1" height="15.5" fill="#cdcdcd"/><rect x="1075.0" y="224.5" width="1" height="429.0" fill="#dedede"/><rect x="1139.0" y="208" width="1" height="15.5" fill="#cdcdcd"/><rect x="1139.0" y="224.5" width="1" height="429.0" fill="#dedede"/><rect x="1203.0" y="208" width="1" height="15.5" fill="#cdcdcd"/><rect x="1203.0" y="224.5" width="1" height="429.0" fill="#dedede"/><rect x="29" y="244.50" width="1231" height="1" fill="#dedede"/><rect x="0" y="244.50" width="28" height="1" fill="#d2d2d2"/><rect x="29" y="264.80" width="1231" height="1" fill="#dedede"/><rect x="0" y="264.80" width="28" height="1" fill="#d2d2d2"/><rect x="29" y="284.90" width="1231" height="1" fill="#dedede"/><rect x="0" y="284.90" width="28" height="1" fill="#d2d2d2"/><rect x="29" y="304.10" width="1231" height="1" fill="#dedede"/><rect x="0" y="304.10" width="28" height="1" fill="#d2d2d2"/><rect x="29" y="323.40" width="1231" height="1" fill="#dedede"/><rect x="0" y="323.40" width="28" height="1" fill="#d2d2d2"/><rect x="29" y="342.80" width="1231" height="1" fill="#dedede"/><rect x="0" y="342.80" width="28" height="1" fill="#d2d2d2"/><rect x="29" y="363.30" width="1231" height="1" fill="#dedede"/><rect x="0" y="363.30" width="28" height="1" fill="#d2d2d2"/><rect x="29" y="383.50" width="1231" height="1" fill="#dedede"/><rect x="0" y="383.50" width="28" height="1" fill="#d2d2d2"/><rect x="29" y="403.50" width="1231" height="1" fill="#dedede"/><rect x="0" y="403.50" width="28" height="1" fill="#d2d2d2"/><rect x="29" y="423.10" width="1231" height="1" fill="#dedede"/><rect x="0" y="423.10" width="28" height="1" fill="#d2d2d2"/><rect x="29" y="442.80" width="1231" height="1" fill="#dedede"/><rect x="0" y="442.80" width="28" height="1" fill="#d2d2d2"/><rect x="29" y="461.80" width="1231" height="1" fill="#dedede"/><rect x="0" y="461.80" width="28" height="1" fill="#d2d2d2"/><rect x="29" y="481.10" width="1231" height="1" fill="#dedede"/><rect x="0" y="481.10" width="28" height="1" fill="#d2d2d2"/><rect x="29" y="500.90" width="1231" height="1" fill="#dedede"/><rect x="0" y="500.90" width="28" height="1" fill="#d2d2d2"/><rect x="29" y="519.90" width="1231" height="1" fill="#dedede"/><rect x="0" y="519.90" width="28" height="1" fill="#d2d2d2"/><rect x="29" y="539.20" width="1231" height="1" fill="#dedede"/><rect x="0" y="539.20" width="28" height="1" fill="#d2d2d2"/><rect x="29" y="558.70" width="1231" height="1" fill="#dedede"/><rect x="0" y="558.70" width="28" height="1" fill="#d2d2d2"/><rect x="29" y="577.80" width="1231" height="1" fill="#dedede"/><rect x="0" y="577.80" width="28" height="1" fill="#d2d2d2"/><rect x="29" y="597.00" width="1231" height="1" fill="#dedede"/><rect x="0" y="597.00" width="28" height="1" fill="#d2d2d2"/><rect x="29" y="617.00" width="1231" height="1" fill="#dedede"/><rect x="0" y="617.00" width="28" height="1" fill="#d2d2d2"/><rect x="29" y="636.20" width="1231" height="1" fill="#dedede"/><rect x="0" y="636.20" width="28" height="1" fill="#d2d2d2"/></svg>
<div style="left:29px;top:225.0px;width:470.0px;height:19.0px;background:#fff"></div>
<div style="left:30.5px;top:210px;width:60px;text-align:center;font-size:13px;color:#222;font-weight:normal;white-space:nowrap;line-height:1.15;">A</div>
<div style="left:94.5px;top:210px;width:60px;text-align:center;font-size:13px;color:#222;font-weight:normal;white-space:nowrap;line-height:1.15;">B</div>
<div style="left:158.5px;top:210px;width:60px;text-align:center;font-size:13px;color:#222;font-weight:normal;white-space:nowrap;line-height:1.15;">C</div>
<div style="left:234.0px;top:210px;width:60px;text-align:center;font-size:13px;color:#222;font-weight:normal;white-space:nowrap;line-height:1.15;">D</div>
<div style="left:309.5px;top:210px;width:60px;text-align:center;font-size:13px;color:#222;font-weight:normal;white-space:nowrap;line-height:1.15;">E</div>
<div style="left:373.5px;top:210px;width:60px;text-align:center;font-size:13px;color:#222;font-weight:normal;white-space:nowrap;line-height:1.15;">F</div>
<div style="left:437.5px;top:210px;width:60px;text-align:center;font-size:13px;color:#222;font-weight:normal;white-space:nowrap;line-height:1.15;">G</div>
<div style="left:501.5px;top:210px;width:60px;text-align:center;font-size:13px;color:#222;font-weight:normal;white-space:nowrap;line-height:1.15;">H</div>
<div style="left:565.5px;top:210px;width:60px;text-align:center;font-size:13px;color:#222;font-weight:normal;white-space:nowrap;line-height:1.15;">I</div>
<div style="left:629.5px;top:210px;width:60px;text-align:center;font-size:13px;color:#222;font-weight:normal;white-space:nowrap;line-height:1.15;">J</div>
<div style="left:693.5px;top:210px;width:60px;text-align:center;font-size:13px;color:#222;font-weight:normal;white-space:nowrap;line-height:1.15;">K</div>
<div style="left:757.5px;top:210px;width:60px;text-align:center;font-size:13px;color:#222;font-weight:normal;white-space:nowrap;line-height:1.15;">L</div>
<div style="left:821.5px;top:210px;width:60px;text-align:center;font-size:13px;color:#222;font-weight:normal;white-space:nowrap;line-height:1.15;">M</div>
<div style="left:885.5px;top:210px;width:60px;text-align:center;font-size:13px;color:#222;font-weight:normal;white-space:nowrap;line-height:1.15;">N</div>
<div style="left:949.5px;top:210px;width:60px;text-align:center;font-size:13px;color:#222;font-weight:normal;white-space:nowrap;line-height:1.15;">O</div>
<div style="left:1013.5px;top:210px;width:60px;text-align:center;font-size:13px;color:#222;font-weight:normal;white-space:nowrap;line-height:1.15;">P</div>
<div style="left:1077.5px;top:210px;width:60px;text-align:center;font-size:13px;color:#222;font-weight:normal;white-space:nowrap;line-height:1.15;">Q</div>
<div style="left:1141.5px;top:210px;width:60px;text-align:center;font-size:13px;color:#222;font-weight:normal;white-space:nowrap;line-height:1.15;">R</div>
<div style="left:1205.5px;top:210px;width:60px;text-align:center;font-size:13px;color:#222;font-weight:normal;white-space:nowrap;line-height:1.15;">S</div>
<div style="left:0.0px;top:229.45px;width:28px;text-align:center;font-size:12.6px;color:#222;font-weight:normal;white-space:nowrap;line-height:1.15;">1</div>
<div style="left:0.0px;top:249.85px;width:28px;text-align:center;font-size:12.6px;color:#222;font-weight:normal;white-space:nowrap;line-height:1.15;">2</div>
<div style="left:0.0px;top:270.05px;width:28px;text-align:center;font-size:12.6px;color:#222;font-weight:normal;white-space:nowrap;line-height:1.15;">3</div>
<div style="left:0.0px;top:289.7px;width:28px;text-align:center;font-size:12.6px;color:#222;font-weight:normal;white-space:nowrap;line-height:1.15;">4</div>
<div style="left:0.0px;top:308.95px;width:28px;text-align:center;font-size:12.6px;color:#222;font-weight:normal;white-space:nowrap;line-height:1.15;">5</div>
<div style="left:0.0px;top:328.3px;width:28px;text-align:center;font-size:12.6px;color:#222;font-weight:normal;white-space:nowrap;line-height:1.15;">6</div>
<div style="left:0.0px;top:348.25px;width:28px;text-align:center;font-size:12.6px;color:#222;font-weight:normal;white-space:nowrap;line-height:1.15;">7</div>
<div style="left:0.0px;top:368.59999999999997px;width:28px;text-align:center;font-size:12.6px;color:#222;font-weight:normal;white-space:nowrap;line-height:1.15;">8</div>
<div style="left:0.0px;top:388.7px;width:28px;text-align:center;font-size:12.6px;color:#222;font-weight:normal;white-space:nowrap;line-height:1.15;">9</div>
<div style="left:0.0px;top:408.5px;width:28px;text-align:center;font-size:12.6px;color:#222;font-weight:normal;white-space:nowrap;line-height:1.15;">10</div>
<div style="left:0.0px;top:428.15000000000003px;width:28px;text-align:center;font-size:12.6px;color:#222;font-weight:normal;white-space:nowrap;line-height:1.15;">11</div>
<div style="left:0.0px;top:447.5px;width:28px;text-align:center;font-size:12.6px;color:#222;font-weight:normal;white-space:nowrap;line-height:1.15;">12</div>
<div style="left:0.0px;top:466.65000000000003px;width:28px;text-align:center;font-size:12.6px;color:#222;font-weight:normal;white-space:nowrap;line-height:1.15;">13</div>
<div style="left:0.0px;top:486.2px;width:28px;text-align:center;font-size:12.6px;color:#222;font-weight:normal;white-space:nowrap;line-height:1.15;">14</div>
<div style="left:0.0px;top:505.59999999999997px;width:28px;text-align:center;font-size:12.6px;color:#222;font-weight:normal;white-space:nowrap;line-height:1.15;">15</div>
<div style="left:0.0px;top:524.75px;width:28px;text-align:center;font-size:12.6px;color:#222;font-weight:normal;white-space:nowrap;line-height:1.15;">16</div>
<div style="left:0.0px;top:544.1500000000001px;width:28px;text-align:center;font-size:12.6px;color:#222;font-weight:normal;white-space:nowrap;line-height:1.15;">17</div>
<div style="left:0.0px;top:563.45px;width:28px;text-align:center;font-size:12.6px;color:#222;font-weight:normal;white-space:nowrap;line-height:1.15;">18</div>
<div style="left:0.0px;top:582.6px;width:28px;text-align:center;font-size:12.6px;color:#222;font-weight:normal;white-space:nowrap;line-height:1.15;">19</div>
<div style="left:0.0px;top:602.2px;width:28px;text-align:center;font-size:12.6px;color:#222;font-weight:normal;white-space:nowrap;line-height:1.15;">20</div>
<div style="left:0.0px;top:621.8000000000001px;width:28px;text-align:center;font-size:12.6px;color:#222;font-weight:normal;white-space:nowrap;line-height:1.15;">21</div>
<div style="left:0.0px;top:641.1500000000001px;width:28px;text-align:center;font-size:12.6px;color:#222;font-weight:normal;white-space:nowrap;line-height:1.15;">22</div>
<div style="left:164.0px;top:227.15px;width:200px;text-align:center;font-size:13.2px;color:#3a617c;font-weight:bold;white-space:nowrap;line-height:1.15;">Wydatki domowe</div>
<div style="left:10.5px;top:248.8475px;width:100px;text-align:center;font-size:12.7px;color:#d3be46;font-weight:bold;white-space:nowrap;line-height:1.15;">lata</div>
<div style="left:74.5px;top:248.8475px;width:100px;text-align:center;font-size:12.7px;color:#d3be46;font-weight:bold;white-space:nowrap;line-height:1.15;">żywność</div>
<div style="left:138.5px;top:248.8475px;width:100px;text-align:center;font-size:12.7px;color:#d3be46;font-weight:bold;white-space:nowrap;line-height:1.15;">odzież</div>
<div style="left:214.0px;top:248.8475px;width:100px;text-align:center;font-size:12.7px;color:#d3be46;font-weight:bold;white-space:nowrap;line-height:1.15;">opłaty stałe</div>
<div style="left:289.5px;top:248.8475px;width:100px;text-align:center;font-size:12.7px;color:#d3be46;font-weight:bold;white-space:nowrap;line-height:1.15;">podróże</div>
<div style="left:353.5px;top:248.8475px;width:100px;text-align:center;font-size:12.7px;color:#d3be46;font-weight:bold;white-space:nowrap;line-height:1.15;">inne</div>
<div style="left:417.5px;top:248.8475px;width:100px;text-align:center;font-size:12.7px;color:#d3be46;font-weight:bold;white-space:nowrap;line-height:1.15;">suma</div>
<div style="left:-10.5px;top:270.0475px;width:100px;text-align:right;font-size:12.7px;color:#000;font-weight:normal;white-space:nowrap;line-height:1.15;">2016</div>
<div style="left:53.5px;top:270.0475px;width:100px;text-align:right;font-size:12.7px;color:#000;font-weight:normal;white-space:nowrap;line-height:1.15;">13200</div>
<div style="left:117.5px;top:270.0475px;width:100px;text-align:right;font-size:12.7px;color:#000;font-weight:normal;white-space:nowrap;line-height:1.15;">8600</div>
<div style="left:204.5px;top:270.0475px;width:100px;text-align:right;font-size:12.7px;color:#000;font-weight:normal;white-space:nowrap;line-height:1.15;">6000</div>
<div style="left:268.5px;top:270.0475px;width:100px;text-align:right;font-size:12.7px;color:#000;font-weight:normal;white-space:nowrap;line-height:1.15;">4800</div>
<div style="left:332.5px;top:270.0475px;width:100px;text-align:right;font-size:12.7px;color:#000;font-weight:normal;white-space:nowrap;line-height:1.15;">1000</div>
<div style="left:396.5px;top:270.0475px;width:100px;text-align:right;font-size:12.7px;color:#000;font-weight:normal;white-space:nowrap;line-height:1.15;">33600</div>
<div style="left:-10.5px;top:289.6975px;width:100px;text-align:right;font-size:12.7px;color:#000;font-weight:normal;white-space:nowrap;line-height:1.15;">2017</div>
<div style="left:53.5px;top:289.6975px;width:100px;text-align:right;font-size:12.7px;color:#000;font-weight:normal;white-space:nowrap;line-height:1.15;">14000</div>
<div style="left:117.5px;top:289.6975px;width:100px;text-align:right;font-size:12.7px;color:#000;font-weight:normal;white-space:nowrap;line-height:1.15;">7000</div>
<div style="left:204.5px;top:289.6975px;width:100px;text-align:right;font-size:12.7px;color:#000;font-weight:normal;white-space:nowrap;line-height:1.15;">6100</div>
<div style="left:268.5px;top:289.6975px;width:100px;text-align:right;font-size:12.7px;color:#000;font-weight:normal;white-space:nowrap;line-height:1.15;">5000</div>
<div style="left:332.5px;top:289.6975px;width:100px;text-align:right;font-size:12.7px;color:#000;font-weight:normal;white-space:nowrap;line-height:1.15;">1500</div>
<div style="left:396.5px;top:289.6975px;width:100px;text-align:right;font-size:12.7px;color:#000;font-weight:normal;white-space:nowrap;line-height:1.15;">33600</div>
<div style="left:-10.5px;top:308.9475px;width:100px;text-align:right;font-size:12.7px;color:#000;font-weight:normal;white-space:nowrap;line-height:1.15;">2018</div>
<div style="left:53.5px;top:308.9475px;width:100px;text-align:right;font-size:12.7px;color:#000;font-weight:normal;white-space:nowrap;line-height:1.15;">14500</div>
<div style="left:117.5px;top:308.9475px;width:100px;text-align:right;font-size:12.7px;color:#000;font-weight:normal;white-space:nowrap;line-height:1.15;">6300</div>
<div style="left:204.5px;top:308.9475px;width:100px;text-align:right;font-size:12.7px;color:#000;font-weight:normal;white-space:nowrap;line-height:1.15;">6150</div>
<div style="left:268.5px;top:308.9475px;width:100px;text-align:right;font-size:12.7px;color:#000;font-weight:normal;white-space:nowrap;line-height:1.15;">3700</div>
<div style="left:332.5px;top:308.9475px;width:100px;text-align:right;font-size:12.7px;color:#000;font-weight:normal;white-space:nowrap;line-height:1.15;">2000</div>
<div style="left:396.5px;top:308.9475px;width:100px;text-align:right;font-size:12.7px;color:#000;font-weight:normal;white-space:nowrap;line-height:1.15;">33600</div>
<div style="left:-10.5px;top:328.2975px;width:100px;text-align:right;font-size:12.7px;color:#000;font-weight:normal;white-space:nowrap;line-height:1.15;">2019</div>
<div style="left:53.5px;top:328.2975px;width:100px;text-align:right;font-size:12.7px;color:#000;font-weight:normal;white-space:nowrap;line-height:1.15;">12800</div>
<div style="left:117.5px;top:328.2975px;width:100px;text-align:right;font-size:12.7px;color:#000;font-weight:normal;white-space:nowrap;line-height:1.15;">5700</div>
<div style="left:204.5px;top:328.2975px;width:100px;text-align:right;font-size:12.7px;color:#000;font-weight:normal;white-space:nowrap;line-height:1.15;">6200</div>
<div style="left:268.5px;top:328.2975px;width:100px;text-align:right;font-size:12.7px;color:#000;font-weight:normal;white-space:nowrap;line-height:1.15;">4000</div>
<div style="left:332.5px;top:328.2975px;width:100px;text-align:right;font-size:12.7px;color:#000;font-weight:normal;white-space:nowrap;line-height:1.15;">1900</div>
<div style="left:396.5px;top:328.2975px;width:100px;text-align:right;font-size:12.7px;color:#000;font-weight:normal;white-space:nowrap;line-height:1.15;">33600</div>
<div style="left:-10.5px;top:348.2475px;width:100px;text-align:right;font-size:12.7px;color:#000;font-weight:normal;white-space:nowrap;line-height:1.15;">2020</div>
<div style="left:53.5px;top:348.2475px;width:100px;text-align:right;font-size:12.7px;color:#000;font-weight:normal;white-space:nowrap;line-height:1.15;">13500</div>
<div style="left:117.5px;top:348.2475px;width:100px;text-align:right;font-size:12.7px;color:#000;font-weight:normal;white-space:nowrap;line-height:1.15;">7200</div>
<div style="left:204.5px;top:348.2475px;width:100px;text-align:right;font-size:12.7px;color:#000;font-weight:normal;white-space:nowrap;line-height:1.15;">5700</div>
<div style="left:268.5px;top:348.2475px;width:100px;text-align:right;font-size:12.7px;color:#000;font-weight:normal;white-space:nowrap;line-height:1.15;">3800</div>
<div style="left:332.5px;top:348.2475px;width:100px;text-align:right;font-size:12.7px;color:#000;font-weight:normal;white-space:nowrap;line-height:1.15;">900</div>
<div style="left:396.5px;top:348.2475px;width:100px;text-align:right;font-size:12.7px;color:#000;font-weight:normal;white-space:nowrap;line-height:1.15;">33600</div>
<div style="left:-10.5px;top:368.59749999999997px;width:100px;text-align:right;font-size:12.7px;color:#000;font-weight:bold;white-space:nowrap;line-height:1.15;">suma</div>
<div style="left:53.5px;top:368.59749999999997px;width:100px;text-align:right;font-size:12.7px;color:#000;font-weight:normal;white-space:nowrap;line-height:1.15;">68000</div>
<div style="left:117.5px;top:368.59749999999997px;width:100px;text-align:right;font-size:12.7px;color:#000;font-weight:normal;white-space:nowrap;line-height:1.15;">34800</div>
<div style="left:204.5px;top:368.59749999999997px;width:100px;text-align:right;font-size:12.7px;color:#000;font-weight:normal;white-space:nowrap;line-height:1.15;">30150</div>
<div style="left:268.5px;top:368.59749999999997px;width:100px;text-align:right;font-size:12.7px;color:#000;font-weight:normal;white-space:nowrap;line-height:1.15;">21300</div>
<div style="left:332.5px;top:368.59749999999997px;width:100px;text-align:right;font-size:12.7px;color:#000;font-weight:normal;white-space:nowrap;line-height:1.15;">7300</div>
<div style="left:396.5px;top:368.59749999999997px;width:100px;text-align:right;font-size:12.7px;color:#000;font-weight:normal;white-space:nowrap;line-height:1.15;">161550</div>
<svg style="left:0;top:0" width="1280" height="720" viewBox="0 0 1280 720"><rect x="28.5" y="264.80" width="471.0" height="1" fill="#111"/><rect x="28.5" y="284.90" width="471.0" height="1" fill="#111"/><rect x="28.5" y="304.10" width="471.0" height="1" fill="#111"/><rect x="28.5" y="323.40" width="471.0" height="1" fill="#111"/><rect x="28.5" y="342.80" width="471.0" height="1" fill="#111"/><rect x="92.0" y="245" width="1" height="139" fill="#111"/><rect x="156.0" y="245" width="1" height="139" fill="#111"/><rect x="220.0" y="245" width="1" height="139" fill="#111"/><rect x="307.0" y="245" width="1" height="139" fill="#111"/><rect x="371.0" y="245" width="1" height="139" fill="#111"/><rect x="28.0" y="244.00" width="472.5" height="2" fill="#000"/><rect x="28.0" y="264.30" width="472.5" height="2" fill="#000"/><rect x="28.0" y="362.80" width="472.5" height="2" fill="#000"/><rect x="28.0" y="383.00" width="472.5" height="2" fill="#000"/><rect x="27.5" y="244" width="2" height="141" fill="#000"/><rect x="434.5" y="244" width="2" height="141" fill="#000"/><rect x="498.5" y="244" width="2" height="141" fill="#000"/><rect x="498.9" y="225.0" width="1.2" height="20.5" fill="#222"/></svg>
<div style="left:524.5px;top:255.5px;width:481px;height:289px;background:#fff;border:1px solid #a9a9a9;box-sizing:border-box"></div>
<svg style="left:0;top:0" width="1280" height="720" viewBox="0 0 1280 720"><rect x="574.5" y="481.20" width="415.5" height="1" fill="#d5d5d5"/><rect x="574.5" y="459.15" width="415.5" height="1" fill="#d5d5d5"/><rect x="574.5" y="437.10" width="415.5" height="1" fill="#d5d5d5"/><rect x="574.5" y="415.05" width="415.5" height="1" fill="#d5d5d5"/><rect x="574.5" y="393.00" width="415.5" height="1" fill="#d5d5d5"/><rect x="574.5" y="370.95" width="415.5" height="1" fill="#d5d5d5"/><rect x="574.5" y="348.90" width="415.5" height="1" fill="#d5d5d5"/><rect x="574.5" y="326.85" width="415.5" height="1" fill="#d5d5d5"/><rect x="574.5" y="304.80" width="415.5" height="1" fill="#d5d5d5"/><rect x="585.50" y="336.17" width="10" height="145.53" fill="#5b9bd5"/><rect x="668.50" y="327.35" width="10" height="154.35" fill="#5b9bd5"/><rect x="751.50" y="321.84" width="10" height="159.86" fill="#5b9bd5"/><rect x="834.50" y="340.58" width="10" height="141.12" fill="#5b9bd5"/><rect x="917.50" y="332.86" width="10" height="148.84" fill="#5b9bd5"/><rect x="598.20" y="386.88" width="10" height="94.81" fill="#ed7d31"/><rect x="681.20" y="404.52" width="10" height="77.17" fill="#ed7d31"/><rect x="764.20" y="412.24" width="10" height="69.46" fill="#ed7d31"/><rect x="847.20" y="418.86" width="10" height="62.84" fill="#ed7d31"/><rect x="930.20" y="402.32" width="10" height="79.38" fill="#ed7d31"/><rect x="610.90" y="415.55" width="10" height="66.15" fill="#a5a5a5"/><rect x="693.90" y="414.45" width="10" height="67.25" fill="#a5a5a5"/><rect x="776.90" y="413.90" width="10" height="67.80" fill="#a5a5a5"/><rect x="859.90" y="413.34" width="10" height="68.36" fill="#a5a5a5"/><rect x="942.90" y="418.86" width="10" height="62.84" fill="#a5a5a5"/><rect x="623.60" y="428.78" width="10" height="52.92" fill="#ffc000"/><rect x="706.60" y="426.57" width="10" height="55.12" fill="#ffc000"/><rect x="789.60" y="440.91" width="10" height="40.79" fill="#ffc000"/><rect x="872.60" y="437.60" width="10" height="44.10" fill="#ffc000"/><rect x="955.60" y="439.81" width="10" height="41.90" fill="#ffc000"/><rect x="636.30" y="470.68" width="10" height="11.03" fill="#4472c4"/><rect x="719.30" y="465.16" width="10" height="16.54" fill="#4472c4"/><rect x="802.30" y="459.65" width="10" height="22.05" fill="#4472c4"/><rect x="885.30" y="460.75" width="10" height="20.95" fill="#4472c4"/><rect x="968.30" y="471.78" width="10" height="9.92" fill="#4472c4"/><rect x="623.3" y="521.8" width="6.2" height="6.2" fill="#5b9bd5"/><rect x="686.3" y="521.8" width="6.2" height="6.2" fill="#ed7d31"/><rect x="738.3" y="521.8" width="6.2" height="6.2" fill="#a5a5a5"/><rect x="817.5" y="521.8" width="6.2" height="6.2" fill="#ffc000"/><rect x="879.5" y="521.8" width="6.2" height="6.2" fill="#4472c4"/><circle cx="525" cy="256" r="4.6" fill="#fff" stroke="#7a7a7a" stroke-width="1.3"/><circle cx="765" cy="256" r="4.6" fill="#fff" stroke="#7a7a7a" stroke-width="1.3"/><circle cx="1005" cy="256" r="4.6" fill="#fff" stroke="#7a7a7a" stroke-width="1.3"/><circle cx="525" cy="400" r="4.6" fill="#fff" stroke="#7a7a7a" stroke-width="1.3"/><circle cx="1005" cy="400" r="4.6" fill="#fff" stroke="#7a7a7a" stroke-width="1.3"/><circle cx="525" cy="544" r="4.6" fill="#fff" stroke="#7a7a7a" stroke-width="1.3"/><circle cx="765" cy="544" r="4.6" fill="#fff" stroke="#7a7a7a" stroke-width="1.3"/><circle cx="1005" cy="544" r="4.6" fill="#fff" stroke="#7a7a7a" stroke-width="1.3"/><rect x="708" y="263.3" width="112.7" height="27.3" fill="none" stroke="#a8a8a8" stroke-width="1"/><circle cx="708" cy="263.3" r="3.2" fill="#cad8e2" stroke="#7d97a8" stroke-width="0.9"/><circle cx="820.7" cy="263.3" r="3.2" fill="#cad8e2" stroke="#7d97a8" stroke-width="0.9"/><circle cx="708" cy="290.6" r="3.2" fill="#cad8e2" stroke="#7d97a8" stroke-width="0.9"/><circle cx="820.7" cy="290.6" r="3.2" fill="#cad8e2" stroke="#7d97a8" stroke-width="0.9"/></svg>
<div style="left:503.5px;top:475.4px;width:60px;text-align:right;font-size:10.7px;color:#595959;font-weight:normal;white-space:nowrap;line-height:1.15;">0</div>
<div style="left:503.5px;top:453.34999999999997px;width:60px;text-align:right;font-size:10.7px;color:#595959;font-weight:normal;white-space:nowrap;line-height:1.15;">2000</div>
<div style="left:503.5px;top:431.29999999999995px;width:60px;text-align:right;font-size:10.7px;color:#595959;font-weight:normal;white-space:nowrap;line-height:1.15;">4000</div>
<div style="left:503.5px;top:409.24999999999994px;width:60px;text-align:right;font-size:10.7px;color:#595959;font-weight:normal;white-space:nowrap;line-height:1.15;">6000</div>
<div style="left:503.5px;top:387.2px;width:60px;text-align:right;font-size:10.7px;color:#595959;font-weight:normal;white-space:nowrap;line-height:1.15;">8000</div>
<div style="left:503.5px;top:365.15px;width:60px;text-align:right;font-size:10.7px;color:#595959;font-weight:normal;white-space:nowrap;line-height:1.15;">10000</div>
<div style="left:503.5px;top:343.09999999999997px;width:60px;text-align:right;font-size:10.7px;color:#595959;font-weight:normal;white-space:nowrap;line-height:1.15;">12000</div>
<div style="left:503.5px;top:321.05px;width:60px;text-align:right;font-size:10.7px;color:#595959;font-weight:normal;white-space:nowrap;line-height:1.15;">14000</div>
<div style="left:503.5px;top:298.99999999999994px;width:60px;text-align:right;font-size:10.7px;color:#595959;font-weight:normal;white-space:nowrap;line-height:1.15;">16000</div>
<div style="left:606.05px;top:493px;width:20px;text-align:center;font-size:10.7px;color:#595959;font-weight:normal;white-space:nowrap;line-height:1.15;">1</div>
<div style="left:689.15px;top:493px;width:20px;text-align:center;font-size:10.7px;color:#595959;font-weight:normal;white-space:nowrap;line-height:1.15;">2</div>
<div style="left:772.25px;top:493px;width:20px;text-align:center;font-size:10.7px;color:#595959;font-weight:normal;white-space:nowrap;line-height:1.15;">3</div>
<div style="left:855.3499999999999px;top:493px;width:20px;text-align:center;font-size:10.7px;color:#595959;font-weight:normal;white-space:nowrap;line-height:1.15;">4</div>
<div style="left:938.45px;top:493px;width:20px;text-align:center;font-size:10.7px;color:#595959;font-weight:normal;white-space:nowrap;line-height:1.15;">5</div>
<div style="left:632.5px;top:518.5px;font-size:10.7px;color:#595959;font-weight:normal;white-space:nowrap;line-height:1.15;letter-spacing:0.028px;">żywność</div>
<div style="left:695.0px;top:518.5px;font-size:10.7px;color:#595959;font-weight:normal;white-space:nowrap;line-height:1.15;letter-spacing:0.014px;">odzież</div>
<div style="left:748.0px;top:518.5px;font-size:10.7px;color:#595959;font-weight:normal;white-space:nowrap;line-height:1.15;letter-spacing:0.216px;">opłaty stałe</div>
<div style="left:826.7px;top:518.5px;font-size:10.7px;color:#595959;font-weight:normal;white-space:nowrap;line-height:1.15;letter-spacing:0.155px;">podróże</div>
<div style="left:888.0px;top:518.5px;font-size:10.7px;color:#595959;font-weight:normal;white-space:nowrap;line-height:1.15;letter-spacing:0.523px;">inne</div>
<div style="left:711.7px;top:269.5px;font-size:16px;color:#444;font-weight:normal;white-space:nowrap;line-height:1.15;letter-spacing:0.615px;">Tytuł wykresu</div>
<svg style="left:784px;top:265px" width="14" height="22" viewBox="784 265 14 22"><path d="M786.5 267.5 H794.5 M790.5 267.5 V283.5 M786.5 283.5 H794.5" fill="none" stroke="#222" stroke-width="1.2"/></svg>
<div style="left:1017px;top:255.5px;width:28px;height:27.5px;background:#fff;border:1px solid #c9c9c9;box-sizing:border-box"></div>
<div style="left:1017px;top:293px;width:28px;height:27.5px;background:#fff;border:1px solid #c9c9c9;box-sizing:border-box"></div>
<div style="left:1017px;top:331.5px;width:28px;height:27.5px;background:#fff;border:1px solid #c9c9c9;box-sizing:border-box"></div>
<svg style="left:1017px;top:255px" width="28" height="106" viewBox="1017 255 28 106">
<path d="M1030.5 262 V276.5 M1023.5 269.2 H1037.5" stroke="#5f9e82" stroke-width="4"/>
<path d="M1037.5 300.5 L1032 309 L1029.5 307.5 Z" fill="#6b7f8c"/>
<path d="M1029.5 308 Q1024 309 1022.5 315.5 Q1027.5 315 1031.5 311 Z" fill="#55687a"/>
<path d="M1021 337 H1040 L1032.5 346 V355.5 H1028.5 V346 Z" fill="#6e6e6e"/>
</svg>
<div style="left:1260px;top:206px;width:20px;height:448px;background:#e6e6e6"></div>
<div style="left:1259px;top:224.5px;width:1px;height:429px;background:#c0c0c0"></div>
<div style="left:1261.5px;top:206.5px;width:16px;height:16.5px;background:#fff;border:1px solid #d0d0d0;box-sizing:border-box"></div>
<div style="left:1261.5px;top:223px;width:16px;height:394.5px;background:#fff;border:1px solid #bfbfbf;box-sizing:border-box"></div>
<div style="left:1261.5px;top:638px;width:16px;height:15.5px;background:#fff;border:1px solid #d0d0d0;box-sizing:border-box"></div>
<svg style="left:1261px;top:206px" width="17" height="448" viewBox="1261 206 17 448"><path d="M1266 216.5 H1273 L1269.5 212.5 Z" fill="#444"/><path d="M1266 644 H1273 L1269.5 648 Z" fill="#555"/></svg>
<div style="left:0px;top:653px;width:1280px;height:23.5px;background:#e6e6e6"></div>
<div style="left:0px;top:653px;width:1260px;height:1.5px;background:#bdbdbd"></div>
<div style="left:0px;top:675.5px;width:1280px;height:1px;background:#cfcfcf"></div>
<div style="left:79px;top:654px;width:66px;height:21px;background:#fff;border-left:1px solid #c8c8c8;border-right:1px solid #c8c8c8;box-sizing:border-box"></div>
<div style="left:79.5px;top:672.8px;width:65px;height:1.5px;background:#1d5438"></div>
<div style="left:71.55733919270833px;top:657.5px;width:80px;text-align:center;font-size:12.7px;color:#1e6240;font-weight:bold;white-space:nowrap;line-height:1.15;letter-spacing:0.115px;">Arkusz1</div>
<svg style="left:0;top:654px" width="200" height="22" viewBox="0 654 200 22">
<path d="M25 661.5 L21.5 665 L25 668.5" fill="none" stroke="#c4c4c4" stroke-width="1.3"/>
<path d="M43 661.5 L46.5 665 L43 668.5" fill="none" stroke="#c4c4c4" stroke-width="1.3"/>
<circle cx="179.5" cy="665" r="6.3" fill="none" stroke="#555" stroke-width="1.1"/>
<path d="M179.5 661 V669 M175.5 665 H183.5" stroke="#555" stroke-width="1.2"/>
</svg>
<svg style="left:762px;top:656px" width="8" height="16" viewBox="0 0 8 16"><circle cx="4.4" cy="4.5" r="0.9" fill="#888"/><circle cx="4.4" cy="8.3" r="0.9" fill="#888"/><circle cx="4.4" cy="12.2" r="0.9" fill="#888"/></svg>
<div style="left:778.5px;top:656.5px;width:16.5px;height:16px;background:#fff"></div>
<div style="left:795px;top:656.5px;width:423px;height:16px;background:#fff;border:1px solid #c6c6c6;box-sizing:border-box"></div>
<div style="left:1218px;top:656.5px;width:27px;height:16px;background:#dadada"></div>
<div style="left:1245px;top:656.5px;width:15px;height:16px;background:#fff"></div>
<svg style="left:778px;top:656px" width="482" height="17" viewBox="778 656 482 17"><path d="M789 660.5 V668 L785 664.3 Z" fill="#555"/><path d="M1250.5 660.5 V668 L1254.5 664.3 Z" fill="#555"/></svg>
<div style="left:0px;top:676.5px;width:1280px;height:21.5px;background:#f1f1f1"></div>
<div style="left:5.5px;top:681px;font-size:10.5px;color:#444;font-weight:normal;white-space:nowrap;line-height:1.15;">Gotowy</div>
<div style="left:1019.5px;top:676.5px;width:29.5px;height:21px;background:#d4d4d4"></div>
<svg style="left:1020px;top:676px" width="260" height="22" viewBox="1020 676 260 22">
<g fill="none" stroke="#666" stroke-width="1.1">
<rect x="1028.5" y="681.5" width="12" height="12"/>
<path d="M1032.5 681.5 V693.5 M1036.5 681.5 V693.5 M1028.5 685.5 H1040.5 M1028.5 689.5 H1040.5"/>
<rect x="1058.5" y="681.5" width="12" height="12"/>
<rect x="1061" y="683.5" width="7" height="8.5" stroke-width="0.9"/>
<path d="M1063 686.5 H1066 M1063 689.5 H1066" stroke-width="0.8"/>
<rect x="1088.5" y="681.5" width="12" height="12"/>
<path d="M1088.5 688 H1096.5 V681.5 M1092.5 681.5 V688" stroke-width="1"/>
</g>
<rect x="1113" y="686" width="8" height="1.5" fill="#555"/>
<rect x="1124" y="686.3" width="100" height="1" fill="#9a9a9a"/>
<rect x="1172" y="681" width="3.5" height="11" fill="#555"/>
<path d="M1227 686.7 H1238.5 M1232.7 681 V692.5" stroke="#555" stroke-width="1.6"/>
</svg>
<div style="left:1249px;top:681px;font-size:10.5px;color:#555;font-weight:normal;white-space:nowrap;line-height:1.15;">100%</div>
<div style="left:0px;top:698px;width:1280px;height:22px;background:#000"></div>
</body></html>
